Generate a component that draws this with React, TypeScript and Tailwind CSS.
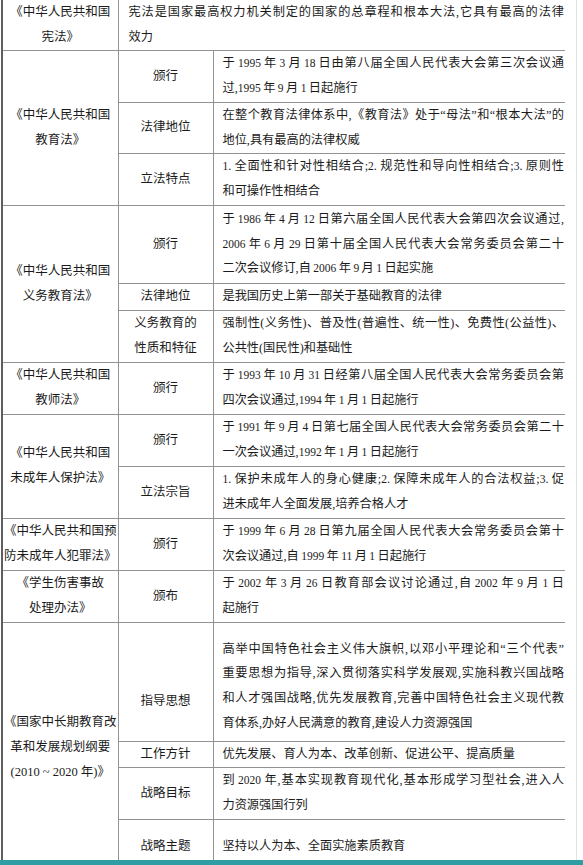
import React from "react";

type Row = {
  label: string[];
  lines: string[];
  h: string;
  labelPad?: string;
  textPad?: string;
  top?: boolean;
};

function fmt(s: string) {
  return s.split(/(\d+)/).map((p, i) =>
    /^\d+$/.test(p) ? (
      <span key={i} className="text-[11.5px]">
        {p}
      </span>
    ) : (
      <React.Fragment key={i}>{p.replace(/ /g, "\u2009")}</React.Fragment>
    )
  );
}

function Lines({ lines, pad = "pl-[9px] pr-[1px]" }: { lines: string[]; pad?: string }) {
  return (
    <div className={pad}>
      {lines.map((l, i) => (
        <div
          key={i}
          className={
            i < lines.length - 1
              ? "whitespace-nowrap text-justify [text-align-last:justify]"
              : "whitespace-nowrap text-left"
          }
        >
          {fmt(l)}
        </div>
      ))}
    </div>
  );
}

function Label({ lines }: { lines: string[] }) {
  return (
    <div className="text-center text-[12.5px]">
      {lines.map((l, i) => (
        <div key={i} className="whitespace-nowrap">
          {l}
        </div>
      ))}
    </div>
  );
}

type Group = { title: string[]; rows: Row[] };

const groups: Group[] = [
  {
    title: ["《中华人民共和国", "教育法》"],
    rows: [
      {
        label: ["颁行"],
        h: "h-[52px]",
        lines: [
          "于 1995 年 3 月 18 日由第八届全国人民代表大会第三次会议通",
          "过,1995 年 9 月 1 日起施行",
        ],
      },
      {
        label: ["法律地位"],
        h: "h-[51px]",
        lines: [
          "在整个教育法律体系中,《教育法》处于“母法”和“根本大法”的",
          "地位,具有最高的法律权威",
        ],
      },
      {
        label: ["立法特点"],
        h: "h-[52px]",
        lines: [
          "1. 全面性和针对性相结合;2. 规范性和导向性相结合;3. 原则性",
          "和可操作性相结合",
        ],
      },
    ],
  },
  {
    title: ["《中华人民共和国", "义务教育法》"],
    rows: [
      {
        label: ["颁行"],
        h: "h-[78px]",
        lines: [
          "于 1986 年 4 月 12 日第六届全国人民代表大会第四次会议通过,",
          "2006 年 6 月 29 日第十届全国人民代表大会常务委员会第二十",
          "二次会议修订,自 2006 年 9 月 1 日起实施",
        ],
      },
      {
        label: ["法律地位"],
        h: "h-[27px]",
        lines: ["是我国历史上第一部关于基础教育的法律"],
      },
      {
        label: ["义务教育的", "性质和特征"],
        h: "h-[52px]",
        lines: [
          "强制性(义务性)、普及性(普遍性、统一性)、免费性(公益性)、",
          "公共性(国民性)和基础性",
        ],
      },
    ],
  },
  {
    title: ["《中华人民共和国", "教师法》"],
    rows: [
      {
        label: ["颁行"],
        h: "h-[52px]",
        lines: [
          "于 1993 年 10 月 31 日经第八届全国人民代表大会常务委员会第",
          "四次会议通过,1994 年 1 月 1 日起施行",
        ],
      },
    ],
  },
  {
    title: ["《中华人民共和国", "未成年人保护法》"],
    rows: [
      {
        label: ["颁行"],
        h: "h-[52px]",
        lines: [
          "于 1991 年 9 月 4 日第七届全国人民代表大会常务委员会第二十",
          "一次会议通过,1992 年 1 月 1 日起施行",
        ],
      },
      {
        label: ["立法宗旨"],
        h: "h-[52px]",
        lines: [
          "1. 保护未成年人的身心健康;2. 保障未成年人的合法权益;3. 促",
          "进未成年人全面发展,培养合格人才",
        ],
      },
    ],
  },
  {
    title: ["《中华人民共和国预", "防未成年人犯罪法》"],
    rows: [
      {
        label: ["颁行"],
        h: "h-[52px]",
        lines: [
          "于 1999 年 6 月 28 日第九届全国人民代表大会常务委员会第十",
          "次会议通过,自 1999 年 11 月 1 日起施行",
        ],
      },
    ],
  },
  {
    title: ["《学生伤害事故", "处理办法》"],
    rows: [
      {
        label: ["颁布"],
        h: "h-[52px]",
        lines: [
          "于 2002 年 3 月 26 日教育部会议讨论通过,自 2002 年 9 月 1 日",
          "起施行",
        ],
      },
    ],
  },
  {
    title: ["《国家中长期教育改", "革和发展规划纲要", "(2010 ~ 2020 年)》"],
    rows: [
      {
        label: ["指导思想"],
        h: "h-[119px]",
        top: true,
        labelPad: "pt-[66px]",
        textPad: "pt-[14px]",
        lines: [
          "高举中国特色社会主义伟大旗帜,以邓小平理论和“三个代表”",
          "重要思想为指导,深入贯彻落实科学发展观,实施科教兴国战略",
          "和人才强国战略,优先发展教育,完善中国特色社会主义现代教",
          "育体系,办好人民满意的教育,建设人力资源强国",
        ],
      },
      {
        label: ["工作方针"],
        h: "h-[26px]",
        lines: ["优先发展、育人为本、改革创新、促进公平、提高质量"],
      },
      {
        label: ["战略目标"],
        h: "h-[52px]",
        lines: [
          "到 2020 年,基本实现教育现代化,基本形成学习型社会,进入人",
          "力资源强国行列",
        ],
      },
      {
        label: ["战略主题"],
        h: "h-[54px]",
        lines: ["坚持以人为本、全面实施素质教育"],
      },
    ],
  },
];

const lineC = "border-[#939393]";

export default function App() {
  return (
    <div className="w-[583px] h-[865px] bg-white flex flex-col overflow-hidden font-['Liberation_Serif','Noto_Sans_CJK_SC',serif] text-[12.2px] leading-[24.8px] text-[#1b1b1b]">
      <div className="flex-1 flex flex-row overflow-hidden">
        <div className="w-[565px] pl-[1px] overflow-hidden">
          <table className="table-fixed border-collapse w-[564px]">
            <colgroup>
              <col className="w-[116px]" />
              <col className="w-[95px]" />
              <col />
            </colgroup>
            <tbody>
              <tr>
                <td className={`h-[49px] border-l-2 border-l-[#5e5e5e] border-b ${lineC} align-middle`}>
                  <Label lines={["《中华人民共和国", "宪法》"]} />
                </td>
                <td colSpan={2} className={`border-l border-b ${lineC} align-middle`}>
                  <Lines
                    pad="pl-[10px] pr-[1px]"
                    lines={[
                      "宪法是国家最高权力机关制定的国家的总章程和根本大法,它具有最高的法律",
                      "效力",
                    ]}
                  />
                </td>
              </tr>
              {groups.map((g, gi) =>
                g.rows.map((r, ri) => (
                  <tr key={`${gi}-${ri}`}>
                    {ri === 0 && (
                      <td
                        rowSpan={g.rows.length}
                        className={`border-l-2 border-l-[#5e5e5e] border-b ${lineC} align-middle`}
                      >
                        <Label lines={g.title} />
                      </td>
                    )}
                    <td className={`${r.h} border-l border-b ${lineC} ${r.top ? "align-top" : "align-middle"}`}>
                      <div className={r.labelPad ?? ""}>
                        <Label lines={r.label} />
                      </div>
                    </td>
                    <td className={`border-l border-b ${lineC} ${r.top ? "align-top" : "align-middle"}`}>
                      <div className={r.textPad ?? ""}>
                        <Lines lines={r.lines} />
                      </div>
                    </td>
                  </tr>
                ))
              )}
            </tbody>
          </table>
        </div>
        <div className="w-[12px] border-r border-[#e2e2e2]" />
        <div className="flex-1" />
      </div>
      <div className="h-[5px] bg-[#2f9ea4] shrink-0" />
    </div>
  );
}
